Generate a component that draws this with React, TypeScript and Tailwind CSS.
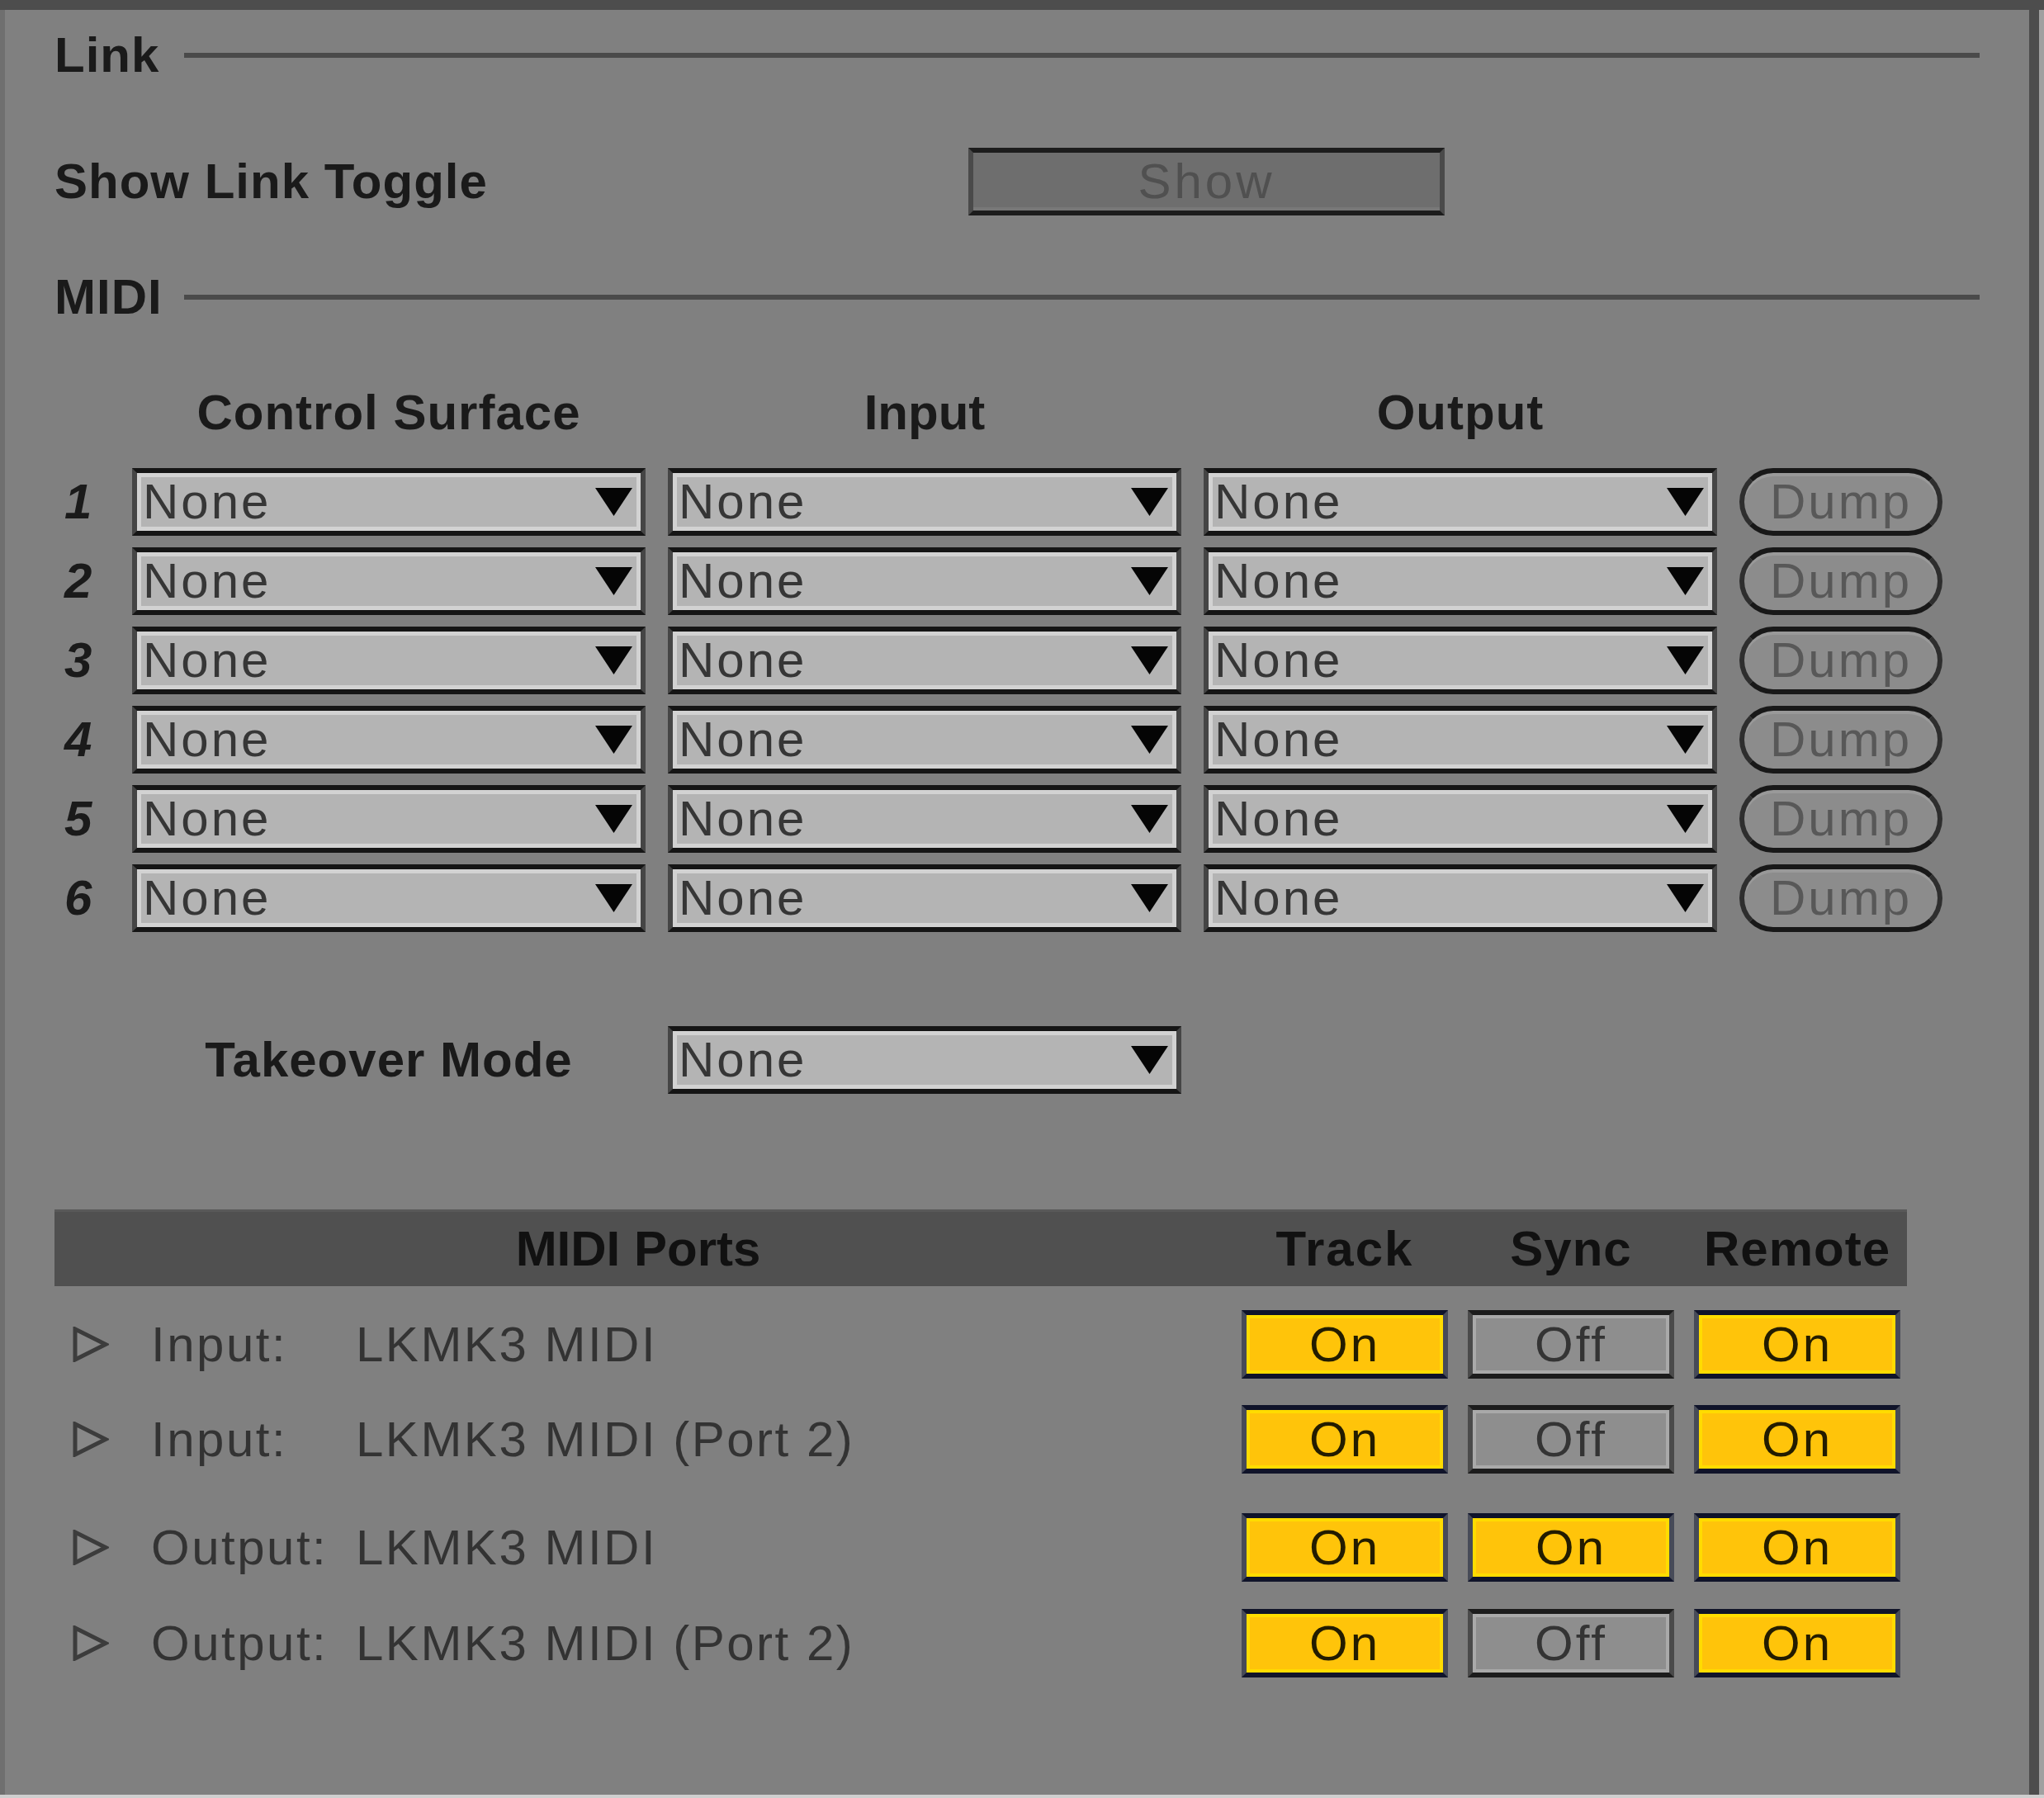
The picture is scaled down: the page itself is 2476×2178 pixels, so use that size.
const rows = [1, 2, 3, 4, 5, 6]

const ports = [
  { kind: 'Input:', name: 'LKMK3 MIDI', track: true, sync: false, remote: true, mt: 'mt-[29px]' },
  { kind: 'Input:', name: 'LKMK3 MIDI (Port 2)', track: true, sync: false, remote: true, mt: 'mt-[32px]' },
  { kind: 'Output:', name: 'LKMK3 MIDI', track: true, sync: true, remote: true, mt: 'mt-[48px]' },
  { kind: 'Output:', name: 'LKMK3 MIDI (Port 2)', track: true, sync: false, remote: true, mt: 'mt-[33px]' },
]

function SectionHeader({ label, className }: { label: string; className: string }) {
  return (
    <div className={`flex items-center h-[60px] ${className}`}>
      <span className="w-[157px] text-[60px] leading-none font-bold tracking-[1px] text-[#1a1a1a]">{label}</span>
      <div className="flex-1 h-[6px] bg-[#4a4a4a]" />
    </div>
  )
}

function Dropdown() {
  return (
    <div className="h-[82px] flex items-center justify-between bg-[#b4b4b4] border-y-[6px] border-y-[#151515] border-x-[6px] border-x-[#454545] shadow-[inset_0_0_0_5px_#d2d2d2] pl-[7px] pr-[10px]">
      <span className="text-[60px] leading-none tracking-[3px] text-[#363636]">None</span>
      <svg width="45" height="34" viewBox="0 0 45 34">
        <polygon points="0,0 45,0 22.5,34" fill="#050505" />
      </svg>
    </div>
  )
}

function DumpButton() {
  return (
    <div className="h-[82px] rounded-full border-[6px] border-[#2e2e2e] border-y-[#181818] bg-[#8c8c8c] shadow-[inset_0_4px_0_#999999] flex items-center justify-center">
      <span className="text-[60px] leading-none tracking-[3px] text-[#585858]">Dump</span>
    </div>
  )
}

function Toggle({ on }: { on: boolean }) {
  return on ? (
    <div className="h-[83px] flex items-center justify-center bg-[#ffc40a] border-y-[6px] border-y-[#10142a] border-x-[6px] border-x-[#474b58] shadow-[inset_0_0_0_4px_#ffdc00]">
      <span className="text-[60px] leading-none tracking-[3px] text-[#231c00]">On</span>
    </div>
  ) : (
    <div className="h-[83px] flex items-center justify-center bg-[#8e8e8e] border-y-[6px] border-y-[#1c1c1c] border-x-[6px] border-x-[#4a4a4a] shadow-[inset_0_0_0_4px_#a9a9a9]">
      <span className="text-[60px] leading-none tracking-[3px] text-[#343434]">Off</span>
    </div>
  )
}

export default function App() {
  return (
    <div className="w-[2476px] h-[2178px] flex flex-col bg-[#808080] border-t-[12px] border-t-[#4d4d4d] border-b-[4px] border-b-[#cfcfcf] font-['Liberation_Sans',Arial,sans-serif] overflow-hidden">
      <div className="flex flex-1">
        <div className="w-[6px] bg-[#6f6f6f]" />
        <main className="flex-1 flex flex-col px-[60px]">
          <SectionHeader label="Link" className="mt-[25px]" />

          <div className="mt-[82px] h-[82px] flex items-center">
            <span className="w-[1107px] text-[60px] leading-none font-bold tracking-[1px] text-[#1a1a1a]">Show Link Toggle</span>
            <div className="w-[577px] h-[82px] flex items-center justify-center bg-[#6e6e6e] border-y-[6px] border-y-[#1c1c1c] border-x-[6px] border-x-[#4a4a4a] shadow-[inset_0_-4px_0_#787878]">
              <span className="text-[60px] leading-none tracking-[4px] text-[#505050]">Show</span>
            </div>
          </div>

          <SectionHeader label="MIDI" className="mt-[69px]" />

          <div className="mt-[80px] h-[60px] grid grid-cols-[67px_622px_622px_622px_246px] gap-x-[27px] items-center text-[60px] leading-none font-bold text-[#1a1a1a]">
            <span />
            <span className="text-center tracking-[1px]">Control Surface</span>
            <span className="text-center">Input</span>
            <span className="text-center tracking-[1px]">Output</span>
            <span />
          </div>

          <div className="mt-[37px] flex flex-col gap-[14px]">
            {rows.map((n) => (
              <div key={n} className="grid grid-cols-[67px_622px_622px_622px_246px] gap-x-[27px] items-center">
                <span className="pl-[12px] text-[60px] leading-none font-bold italic text-[#1a1a1a]">{n}</span>
                <Dropdown />
                <Dropdown />
                <Dropdown />
                <DumpButton />
              </div>
            ))}
          </div>

          <div className="mt-[114px] grid grid-cols-[67px_622px_622px_622px_246px] gap-x-[27px] items-center">
            <span />
            <span className="text-center text-[60px] leading-none font-bold tracking-[1px] text-[#1a1a1a]">Takeover Mode</span>
            <Dropdown />
          </div>

          <div className="mt-[140px] w-[2244px] h-[93px] bg-[#505050] border-t-[3px] border-t-[#595959] grid grid-cols-[1fr_250px_250px_250px] gap-x-[24px] pr-[8px] items-center text-[60px] leading-none font-bold text-[#111111]">
            <span className="text-center">MIDI Ports</span>
            <span className="text-center tracking-[2px]">Track</span>
            <span className="text-center tracking-[1px]">Sync</span>
            <span className="text-center tracking-[1px]">Remote</span>
          </div>

          {ports.map((p, i) => (
            <div key={i} className={`${p.mt} w-[2244px] h-[83px] grid grid-cols-[1fr_250px_250px_250px] gap-x-[24px] pr-[8px] items-center`}>
              <div className="flex items-center text-[60px] leading-none tracking-[2.5px] text-[#333333]">
                <svg width="44" height="43" viewBox="0 0 44 43" className="ml-[22px] mr-[51px] shrink-0">
                  <polygon points="3,3 40,21.5 3,40" fill="#888888" stroke="#3c3c3c" strokeWidth="5" />
                </svg>
                <span className="w-[248px]">{p.kind}</span>
                <span>{p.name}</span>
              </div>
              <Toggle on={p.track} />
              <Toggle on={p.sync} />
              <Toggle on={p.remote} />
            </div>
          ))}
        </main>
        <div className="w-[12px] bg-[#4d4d4d]" />
        <div className="w-[6px] bg-[#a0a0a0]" />
      </div>
    </div>
  )
}
